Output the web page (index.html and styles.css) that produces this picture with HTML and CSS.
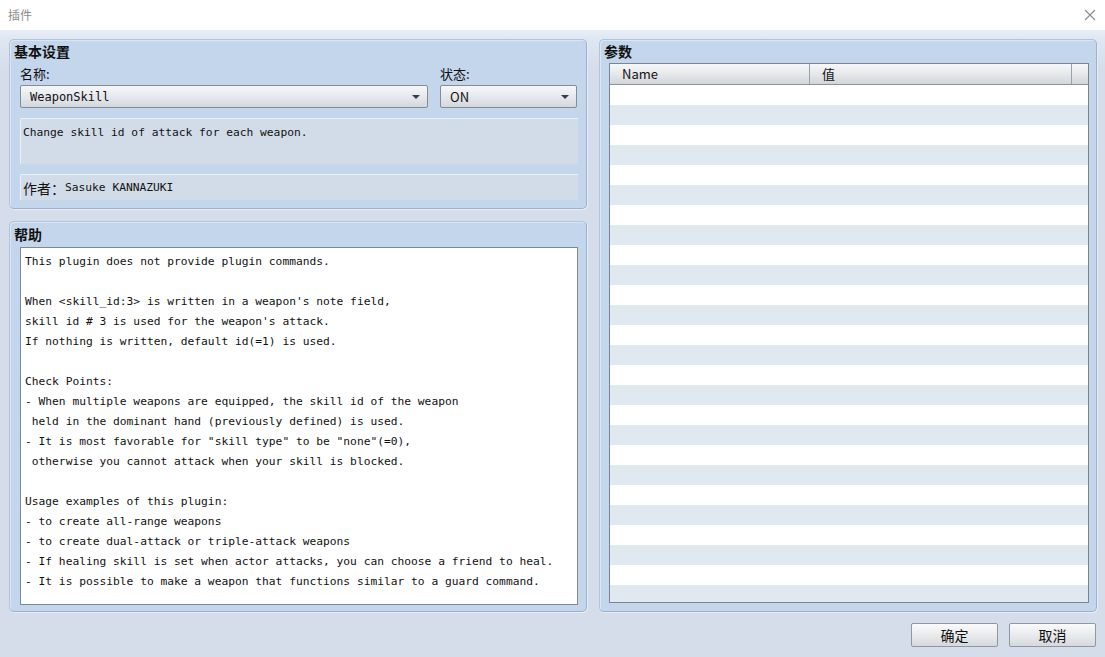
FILE: index.html
```html
<!DOCTYPE html>
<html>
<head>
<meta charset="utf-8">
<link rel="stylesheet" href="styles.css">
</head>
<body>
<div class="window">
  <div class="titlebar">
    <span class="title">插件</span>
    <svg class="close" width="12" height="12" viewBox="0 0 12 12"><path d="M1 1L11 11M11 1L1 11" stroke="#8a8a8a" stroke-width="1.1" fill="none"/></svg>
  </div>
  <div class="body">
    <div class="columns">
      <div class="left">
        <section class="panel basic">
          <h2 class="heading">基本设置</h2>
          <div class="fields">
            <div class="field name-field">
              <label class="label">名称:</label>
              <div class="select mono"><span>WeaponSkill</span><span class="arrow"></span></div>
            </div>
            <div class="field status-field">
              <label class="label">状态:</label>
              <div class="select"><span>ON</span><span class="arrow"></span></div>
            </div>
          </div>
          <div class="desc mono">Change skill id of attack for each weapon.</div>
          <div class="author"><span class="cjk">作者：</span><span class="mono">Sasuke KANNAZUKI</span></div>
        </section>
        <section class="panel help">
          <h2 class="heading">帮助</h2>
          <pre class="helptext mono">This plugin does not provide plugin commands.

When &lt;skill_id:3&gt; is written in a weapon's note field,
skill id # 3 is used for the weapon's attack.
If nothing is written, default id(=1) is used.

Check Points:
- When multiple weapons are equipped, the skill id of the weapon
 held in the dominant hand (previously defined) is used.
- It is most favorable for "skill type" to be "none"(=0),
 otherwise you cannot attack when your skill is blocked.

Usage examples of this plugin:
- to create all-range weapons
- to create dual-attack or triple-attack weapons
- If healing skill is set when actor attacks, you can choose a friend to heal.
- It is possible to make a weapon that functions similar to a guard command.</pre>
        </section>
      </div>
      <section class="panel params">
        <h2 class="heading">参数</h2>
        <div class="table">
          <div class="thead">
            <div class="th col-name">Name</div>
            <div class="th col-val">值</div>
            <div class="th col-pad"></div>
          </div>
          <div class="rows">
            <div class="row"></div><div class="row"></div><div class="row"></div><div class="row"></div>
            <div class="row"></div><div class="row"></div><div class="row"></div><div class="row"></div>
            <div class="row"></div><div class="row"></div><div class="row"></div><div class="row"></div>
            <div class="row"></div><div class="row"></div><div class="row"></div><div class="row"></div>
            <div class="row"></div><div class="row"></div><div class="row"></div><div class="row"></div>
            <div class="row"></div><div class="row"></div><div class="row"></div><div class="row"></div>
            <div class="row"></div><div class="row"></div><div class="row"></div>
          </div>
        </div>
      </section>
    </div>
    <div class="buttons">
      <button class="btn">确定</button>
      <button class="btn">取消</button>
    </div>
  </div>
</div>
</body>
</html>
```
FILE: styles.css
```css
* { box-sizing: border-box; }
html, body { margin: 0; padding: 0; }
body {
  width: 1105px;
  height: 657px;
  overflow: hidden;
  font-family: "Noto Sans CJK SC", "DejaVu Sans", sans-serif;
  color: #111;
  background: #d4dde9;
}
.window { display: flex; flex-direction: column; height: 657px; }
.titlebar {
  height: 30px;
  background: #ffffff;
  display: flex;
  align-items: center;
  justify-content: space-between;
  padding: 0 9px 0 8px;
}
.title { font-size: 12px; color: #8c8c8c; line-height: 1; }
.close { display: block; margin-top: -1px; }
.body {
  flex: 1;
  display: flex;
  flex-direction: column;
  padding: 9px 8px 10px 9px;
  background: linear-gradient(#e9effa 0px, #dfe7f2 8px, #d4dde9 40px, #d4dde9 100%);
}
.columns { display: flex; gap: 12px; height: 573px; }
.left { width: 578px; display: flex; flex-direction: column; gap: 12px; }
.panel {
  background: #c4d6eb;
  border-radius: 5px;
  border: 1px solid #b2c4da;
  border-right-color: #9cb0c8;
  border-bottom-color: #9cb0c8;
  box-shadow: inset 1px 1px 0 #dbe6f4, 1px 1px 0 #e6edf6;
}
.heading {
  margin: 0;
  font-size: 14px;
  font-weight: bold;
  line-height: 20px;
  color: #111;
}
.basic { height: 170px; padding: 1px 9px 0 4px; }
.basic .heading { margin-bottom: 2px; }
.fields { display: flex; gap: 12px; padding-left: 6px; }
.field { display: flex; flex-direction: column; }
.name-field { width: 408px; }
.status-field { width: 137px; }
.label { font-size: 13px; line-height: 22px; height: 22px; color: #111; }
.select {
  height: 23px;
  border: 1px solid #848c97;
  border-radius: 2px;
  background: linear-gradient(#f6f7f9, #e6e9ec 50%, #d3d8dd);
  display: flex;
  align-items: center;
  justify-content: space-between;
  padding: 0 7px 0 9px;
  font-size: 13px;
  color: #111;
}
.select.mono { font-size: 12px; padding-left: 9px; }
.arrow {
  width: 0; height: 0;
  border-left: 4px solid transparent;
  border-right: 4px solid transparent;
  border-top: 4px solid #3a3f46;
  margin-top: 1px;
}
.mono { font-family: "DejaVu Sans Mono", "Noto Sans CJK SC", monospace; }
.cjk { font-family: "Noto Sans CJK SC", sans-serif; font-size: 14px; }
.desc {
  margin: 10px 0 0 6px;
  width: 559px;
  height: 47px;
  background: #d1dce8;
  border: 1px solid #e9f0f9;
  border-right-color: #c9d6e5;
  border-bottom-color: #c9d6e5;
  border-radius: 2px;
  font-size: 11.25px;
  line-height: 14px;
  padding: 7px 0 0 2px;
}
.author {
  margin: 9px 0 0 6px;
  width: 559px;
  height: 27px;
  background: #d1dce8;
  border: 1px solid #e9f0f9;
  border-right-color: #c9d6e5;
  border-bottom-color: #c9d6e5;
  border-radius: 2px;
  padding: 0 0 0 2px;
  display: flex;
  align-items: center;
  font-size: 11.25px;
}
.help { height: 391px; padding: 2px 9px 0 4px; display: flex; flex-direction: column; }
.help .heading { margin-bottom: 3px; }
.helptext {
  margin: 0 0 0 6px;
  width: 558px;
  height: 358px;
  background: #ffffff;
  border: 1px solid #7f8894;
  padding: 4px 4px 0 4px;
  font-size: 11.25px;
  line-height: 20px;
  white-space: pre;
  overflow: hidden;
  color: #111;
}
.params { width: 498px; padding: 1px 8px 0 4px; display: flex; flex-direction: column; }
.params .heading { margin-bottom: 2px; }
.table {
  margin-left: 5px;
  width: 480px;
  height: 540px;
  border: 1px solid #7b8490;
  background: #ffffff;
  overflow: hidden;
  display: flex;
  flex-direction: column;
}
.thead {
  display: flex;
  height: 21px;
  flex: none;
  background: linear-gradient(#f7f7f7, #e6e8ea 50%, #d2d6da);
  border-bottom: 1px solid #8c939c;
}
.th {
  font-size: 13px;
  line-height: 20px;
  padding-left: 12px;
  color: #111;
  border-right: 1px solid #9aa1aa;
}
.col-name { width: 200px; }
.col-val { width: 262px; font-family: "Noto Sans CJK SC", sans-serif; }
.col-pad { flex: 1; border-right: none; }
.rows { flex: 1; overflow: hidden; }
.row { height: 20px; background: #ffffff; }
.row:nth-child(even) { background: #e1e9f0; }
.buttons {
  display: flex;
  justify-content: flex-end;
  gap: 11px;
  padding-top: 11px;
  padding-right: 1px;
}
.btn {
  width: 87px;
  height: 24px;
  border: 1px solid #8f979f;
  border-radius: 2px;
  background: linear-gradient(#fafafa, #e9ebed 50%, #d6d9dc);
  font-family: "Noto Sans CJK SC", sans-serif;
  font-size: 14px;
  color: #111;
  padding: 0;
  line-height: 22px;
}
```
